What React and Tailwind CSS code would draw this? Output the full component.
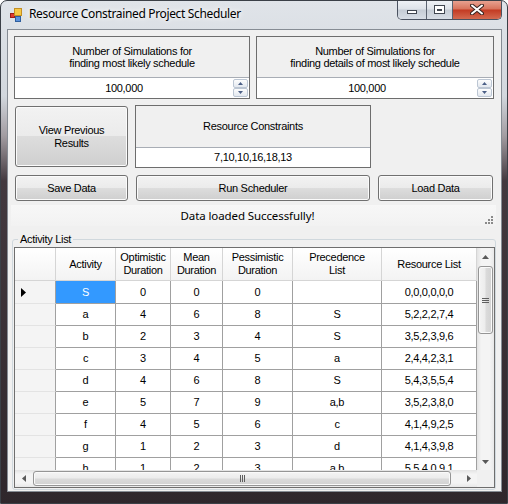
import React from "react";

const base = "font-['Liberation_Sans',Arial,sans-serif] text-[11px] tracking-[-0.3px] text-black";
const ui = "font-['Noto_Sans','Open_Sans',sans-serif]";

function Btn({ children, className }) {
  return (
    <div
      className={
        "flex items-center justify-center text-center leading-[13px] rounded-[3px] border border-[#707070] shadow-[inset_0_0_0_1px_#fbfbfb] bg-[linear-gradient(to_bottom,#f2f2f2_0%,#ebebeb_50%,#dddddd_50%,#cfcfcf_100%)] " +
        className
      }
    >
      {children}
    </div>
  );
}

function Spinner() {
  return (
    <div className="flex flex-col w-[15px] my-[1px] mr-[1px]">
      <div className="h-[9px] border border-[#bcc6d3] rounded-[2px] bg-[linear-gradient(to_bottom,#fdfdfd,#e3e8ef)] flex items-center justify-center">
        <svg width="5" height="3" viewBox="0 0 5 3">
          <path d="M2.5 0L5 3H0z" fill="#4b5f86" />
        </svg>
      </div>
      <div className="h-[9px] border border-[#bcc6d3] rounded-[2px] bg-[linear-gradient(to_bottom,#fdfdfd,#e3e8ef)] flex items-center justify-center">
        <svg width="5" height="3" viewBox="0 0 5 3">
          <path d="M0 0H5L2.5 3z" fill="#4b5f86" />
        </svg>
      </div>
    </div>
  );
}

function NumBox({ l1, l2, w }) {
  return (
    <div className={"flex flex-col h-[63px] border border-[#6d6d6d] " + w}>
      <div className="flex-1 flex items-center justify-center text-center leading-[12px]">
        {l1}
        <br />
        {l2}
      </div>
      <div className="h-[21px] border-t border-[#a8adb5] bg-white flex">
        <div className="flex-1 flex items-center justify-center">100,000</div>
        <Spinner />
      </div>
    </div>
  );
}

const cols = [
  { w: "w-[60px]", h: ["Activity"] },
  { w: "w-[55px]", h: ["Optimistic", "Duration"] },
  { w: "w-[52px]", h: ["Mean", "Duration"] },
  { w: "w-[70px]", h: ["Pessimistic", "Duration"] },
  { w: "w-[89px]", h: ["Precedence", "List"] },
  { w: "w-[95px]", h: ["Resource List"] },
];

const rows = [
  ["S", "0", "0", "0", "", "0,0,0,0,0,0"],
  ["a", "4", "6", "8", "S", "5,2,2,2,7,4"],
  ["b", "2", "3", "4", "S", "3,5,2,3,9,6"],
  ["c", "3", "4", "5", "a", "2,4,4,2,3,1"],
  ["d", "4", "6", "8", "S", "5,4,3,5,5,4"],
  ["e", "5", "7", "9", "a,b", "3,5,2,3,8,0"],
  ["f", "4", "5", "6", "c", "4,1,4,9,2,5"],
  ["g", "1", "2", "3", "d", "4,1,4,3,9,8"],
  ["h", "1", "2", "3", "a,b", "5,5,4,0,9,1"],
];

function Grip({ vertical }) {
  return vertical ? (
    <svg width="7" height="5" viewBox="0 0 7 5">
      <path d="M0 0.5H7M0 2.5H7M0 4.5H7" stroke="#5e5e5e" strokeWidth="1" />
    </svg>
  ) : (
    <svg width="5" height="7" viewBox="0 0 5 7">
      <path d="M0.5 0V7M2.5 0V7M4.5 0V7" stroke="#5e5e5e" strokeWidth="1" />
    </svg>
  );
}

function Grid() {
  return (
    <div className="w-[481px] h-[241px] border border-[#6e6e6e] grid grid-cols-[462px_17px] grid-rows-[222px_17px] bg-white">
      <div className="overflow-hidden">
        <div className="flex h-[33px]">
          <div className="w-[41px] border-r border-b border-[#d5d5d5] bg-[linear-gradient(to_bottom,#ffffff,#f3f3f3)]" />
          {cols.map((c, i) => (
            <div
              key={i}
              className={
                "flex flex-col items-center justify-center leading-[13px] text-center border-r border-b border-[#d5d5d5] bg-[linear-gradient(to_bottom,#ffffff,#f3f3f3)] " +
                c.w
              }
            >
              {c.h.map((t, j) => (
                <span key={j}>{t}</span>
              ))}
            </div>
          ))}
        </div>
        {rows.map((r, ri) => (
          <div key={ri} className={"flex " + (ri === 0 ? "h-[23px]" : "h-[22px]")}>
            <div className="w-[41px] border-r border-[#a0a0a0] border-b border-b-[#e3e3e3] bg-[#f4f4f4] flex items-center pl-[6px]">
              {ri === 0 && (
                <svg width="5" height="9" viewBox="0 0 5 9">
                  <path d="M0 0L5 4.5L0 9z" fill="#000" />
                </svg>
              )}
            </div>
            {r.map((v, ci) => (
              <div
                key={ci}
                className={
                  "flex items-center justify-center border-r border-b border-[#a0a0a0] " +
                  cols[ci].w +
                  (ri === 0 && ci === 0 ? " bg-[#3399ff] text-white" : "")
                }
              >
                {v}
              </div>
            ))}
          </div>
        ))}
      </div>
      {/* vertical scrollbar */}
      <div className="flex flex-col items-center bg-[linear-gradient(to_right,#e3e3e3,#f4f4f4_25%,#f4f4f4_75%,#e8e8e8)]">
        <div className="h-[17px] w-full flex items-center justify-center">
          <svg width="7" height="4" viewBox="0 0 7 4">
            <path d="M3.5 0L7 4H0z" fill="#5a5a5a" />
          </svg>
        </div>
        <div className="mt-[1px] w-[15px] h-[68px] rounded-[3px] border border-[#959595] bg-[linear-gradient(to_right,#f4f4f4,#ececec_45%,#dadada_55%,#d2d2d2)] shadow-[inset_0_0_0_1px_#fafafa] flex items-center justify-center">
          <Grip vertical />
        </div>
        <div className="flex-1" />
        <div className="h-[17px] w-full flex items-center justify-center">
          <svg width="7" height="4" viewBox="0 0 7 4">
            <path d="M0 0H7L3.5 4z" fill="#5a5a5a" />
          </svg>
        </div>
      </div>
      {/* horizontal scrollbar */}
      <div className="flex items-center bg-[linear-gradient(to_bottom,#e3e3e3,#f4f4f4_25%,#f4f4f4_75%,#e8e8e8)]">
        <div className="w-[17px] h-full flex items-center justify-center">
          <svg width="4" height="7" viewBox="0 0 4 7">
            <path d="M0 3.5L4 0V7z" fill="#5a5a5a" />
          </svg>
        </div>
        <div className="ml-[1px] w-[418px] h-[15px] rounded-[3px] border border-[#959595] bg-[linear-gradient(to_bottom,#f4f4f4,#ececec_45%,#dadada_55%,#d2d2d2)] shadow-[inset_0_0_0_1px_#fafafa] flex items-center justify-center">
          <Grip />
        </div>
        <div className="flex-1" />
        <div className="w-[17px] h-full flex items-center justify-center">
          <svg width="4" height="7" viewBox="0 0 4 7">
            <path d="M0 0L4 3.5L0 7z" fill="#5a5a5a" />
          </svg>
        </div>
      </div>
      <div className="bg-[#f0f0f0]" />
    </div>
  );
}

export default function App() {
  return (
    <div className={"w-[508px] h-[504px] overflow-hidden rounded-t-[7px] border border-[#3b4047] flex flex-col bg-[linear-gradient(to_bottom,#e0e4e9_0px,#d2d7dd_95px,#a29ca1_135px,#43393f_180px,#2f272c_504px)] " + base}>
      {/* title bar */}
      <div className="h-[28px] flex items-start shrink-0">
        <svg className="ml-[9px] mt-[7px]" width="12" height="14" viewBox="0 0 12 14">
          <rect x="0.5" y="5.5" width="4" height="4" fill="#e0382f" stroke="#9b1d17" />
          <rect x="4.5" y="0.5" width="7" height="7" fill="#f6c845" stroke="#c48f22" />
          <rect x="5.5" y="8.5" width="5" height="5" fill="#5b92dc" stroke="#2f5f9e" />
        </svg>
        <div className={"ml-[7px] mt-[5px] text-[12px] tracking-[-0.35px] leading-[16px] text-black [text-shadow:0_0_8px_#fff,0_0_4px_#fff] " + ui}>
          Resource Constrained Project Scheduler
        </div>
        <div className="ml-auto mr-[5px] -mt-[1px] flex h-[20px] border border-[#4a5260] border-t-0 rounded-b-[5px] overflow-hidden">
          <div className="w-[29px] border-r border-[#5b6370] bg-[linear-gradient(to_bottom,#f0f3f7_0%,#dde2e8_48%,#c5ccd5_52%,#d7dde5_100%)] flex items-end justify-center pb-[5px]">
            <div className="w-[10px] h-[4px] bg-white border border-[#404650]" />
          </div>
          <div className="w-[26px] border-r border-[#5b6370] bg-[linear-gradient(to_bottom,#f0f3f7_0%,#dde2e8_48%,#c5ccd5_52%,#d7dde5_100%)] flex items-center justify-center">
            <div className="w-[11px] h-[9px] bg-white border border-[#404650] flex items-center justify-center">
              <div className="w-[5px] h-[2px] border border-[#404650]" />
            </div>
          </div>
          <div className="w-[48px] bg-[linear-gradient(to_bottom,#eaa796_0%,#d8735c_48%,#c33a22_52%,#d46a50_100%)] flex items-center justify-center">
            <svg width="14" height="11" viewBox="0 0 14 11">
              <path d="M2 1.5L12 9.5M12 1.5L2 9.5" stroke="#3a2420" strokeWidth="4" strokeLinecap="round" />
              <path d="M2 1.5L12 9.5M12 1.5L2 9.5" stroke="#ffffff" strokeWidth="2" strokeLinecap="round" />
            </svg>
          </div>
        </div>
      </div>

      {/* client area */}
      <div className="ml-[6px] w-[495px] h-[463px] shrink-0 border border-[#868c94] bg-[#f0f0f0] flex flex-col">
        <div className="flex mt-[6px] ml-[6px] gap-[6px]">
          <NumBox w="w-[236px]" l1="Number of Simulations for" l2="finding most likely schedule" />
          <NumBox w="w-[238px]" l1="Number of Simulations for" l2="finding details of most likely schedule" />
        </div>

        <div className="flex mt-[6px]">
          <Btn className="ml-[7px] mt-[1px] w-[113px] h-[61px]">
            View Previous
            <br />
            Results
          </Btn>
          <div className="ml-[7px] w-[236px] h-[63px] border border-[#6d6d6d] flex flex-col">
            <div className="flex-1 flex items-center justify-center">Resource Constraints</div>
            <div className="h-[20px] border-t border-[#a8adb5] bg-white flex items-center justify-center">7,10,10,16,18,13</div>
          </div>
        </div>

        <div className="flex mt-[7px]">
          <Btn className="ml-[7px] w-[113px] h-[26px]">Save Data</Btn>
          <Btn className="ml-[8px] w-[234px] h-[26px]">Run Scheduler</Btn>
          <Btn className="ml-[8px] w-[115px] h-[26px]">Load Data</Btn>
        </div>

        <div className="mt-[4px] ml-[3px] w-[485px] h-[22px] flex items-center bg-[linear-gradient(to_bottom,#f7f7f7,#f2f2f2)]">
          <div className={"flex-1 text-center text-[11.5px] tracking-[-0.1px] " + ui}>Data loaded Successfully!</div>
          <svg className="mr-[2px] mt-[8px]" width="10" height="10" viewBox="0 0 10 10">
            <g fill="#8a8a8a">
              <rect x="7" y="1" width="2" height="2" />
              <rect x="4" y="4" width="2" height="2" />
              <rect x="7" y="4" width="2" height="2" />
              <rect x="1" y="7" width="2" height="2" />
              <rect x="4" y="7" width="2" height="2" />
              <rect x="7" y="7" width="2" height="2" />
            </g>
          </svg>
        </div>

        <fieldset className="mt-[6px] ml-[4px] w-[484px] flex-1 mb-[1px] border border-[#d0d8dd] rounded-[3px] px-[1px] pb-[1px] min-w-0">
          <legend className="ml-[4px] px-[2px] leading-[14px]">Activity List</legend>
          <div className="mt-[1px]">
            <Grid />
          </div>
        </fieldset>
      </div>
    </div>
  );
}
